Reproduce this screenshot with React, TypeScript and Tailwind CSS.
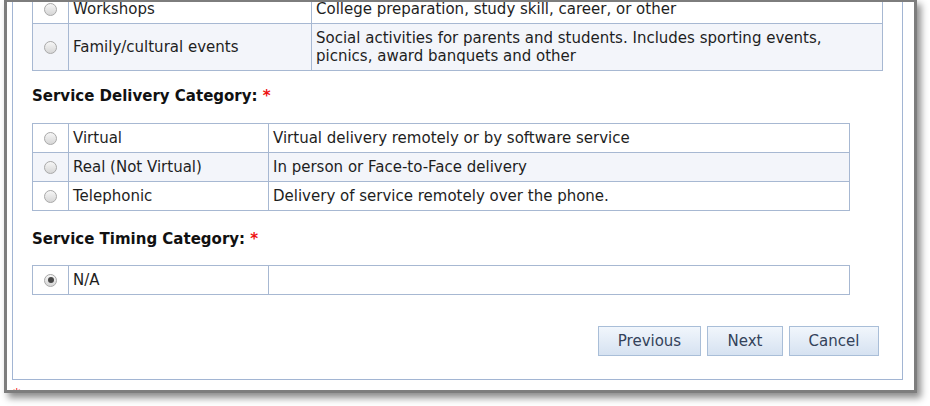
import React from 'react';

// Service category radio tables inside a framed panel (scrolled view)

type Row = { label: string; desc: string; checked?: boolean };

const activityRows: Row[] = [
  { label: 'Workshops', desc: 'College preparation, study skill, career, or other' },
  {
    label: 'Family/cultural events',
    desc: 'Social activities for parents and students. Includes sporting events, picnics, award banquets and other',
  },
];

const deliveryRows: Row[] = [
  { label: 'Virtual', desc: 'Virtual delivery remotely or by software service' },
  { label: 'Real (Not Virtual)', desc: 'In person or Face-to-Face delivery' },
  { label: 'Telephonic', desc: 'Delivery of service remotely over the phone.' },
];

const timingRows: Row[] = [{ label: 'N/A', desc: '', checked: true }];

function Radio({ checked }: { checked?: boolean }) {
  return (
    <span className="mx-auto flex h-[13px] w-[13px] items-center justify-center rounded-full border border-[#a9a9a9] bg-gradient-to-b from-[#f6f6f6] to-[#d6d6d6]">
      {checked && <span className="block h-[6px] w-[6px] rounded-full bg-[#474747]" />}
    </span>
  );
}

function OptionTable({ rows, width, labelWidth }: { rows: Row[]; width: string; labelWidth: string }) {
  return (
    <table className={`table-fixed border-collapse ${width}`}>
      <colgroup>
        <col className="w-[36px]" />
        <col className={labelWidth} />
        <col />
      </colgroup>
      <tbody>
        {rows.map((r, i) => (
          <tr key={r.label} className={i % 2 === 1 ? 'bg-[#f3f5fa]' : 'bg-white'}>
            <td className="border border-[#a7b8d2] py-[5px] align-middle">
              <Radio checked={r.checked} />
            </td>
            <td className="border border-[#a7b8d2] px-[4px] py-[5px] align-middle">{r.label}</td>
            <td className="border border-[#a7b8d2] px-[4px] py-[5px] align-middle">{r.desc}</td>
          </tr>
        ))}
      </tbody>
    </table>
  );
}

function Heading({ children, className }: { children: React.ReactNode; className: string }) {
  return (
    <h3 className={`font-bold text-[#111] ${className}`}>
      {children} <span className="text-[#ee1111]">*</span>
    </h3>
  );
}

function Button({ label, width }: { label: string; width: string }) {
  return (
    <button
      className={`h-[30px] ${width} border border-[#a9bed8] bg-gradient-to-b from-[#f1f6fc] to-[#d6e2f1] text-[15px] text-[#33425a]`}
    >
      {label}
    </button>
  );
}

export default function App() {
  return (
    <div className="relative h-[406px] w-[930px] overflow-hidden bg-white font-['DejaVu_Sans',Verdana,sans-serif] text-[15px] leading-[18px] text-[#1e1e1e]">
      {/* screenshot frame */}
      <div className="-mt-[1px] ml-[4px] h-[394px] w-[913px] overflow-hidden border-[3px] border-[#7d7d7d] bg-white shadow-[4px_5px_7px_rgba(0,0,0,0.45)]">
        {/* panel */}
        <div className="-mt-[19px] ml-[5px] w-[891px] border border-[#a2b5d3] pl-[19px] pt-[10px] pb-[23px]">
          <OptionTable rows={activityRows} width="w-[851px]" labelWidth="w-[243px]" />

          <Heading className="mt-[16px]">Service Delivery Category:</Heading>
          <div className="mt-[18px]">
            <OptionTable rows={deliveryRows} width="w-[818px]" labelWidth="w-[200px]" />
          </div>

          <Heading className="mt-[19px]">Service Timing Category:</Heading>
          <div className="mt-[17px]">
            <OptionTable rows={timingRows} width="w-[818px]" labelWidth="w-[200px]" />
          </div>

          <div className="mt-[31px] flex justify-end gap-[6px] pr-[23px]">
            <Button label="Previous" width="w-[103px]" />
            <Button label="Next" width="w-[76px]" />
            <Button label="Cancel" width="w-[90px]" />
          </div>
        </div>
        <div className="ml-[6px] mt-[6px] text-[#ee1111]">*</div>
      </div>
    </div>
  );
}
